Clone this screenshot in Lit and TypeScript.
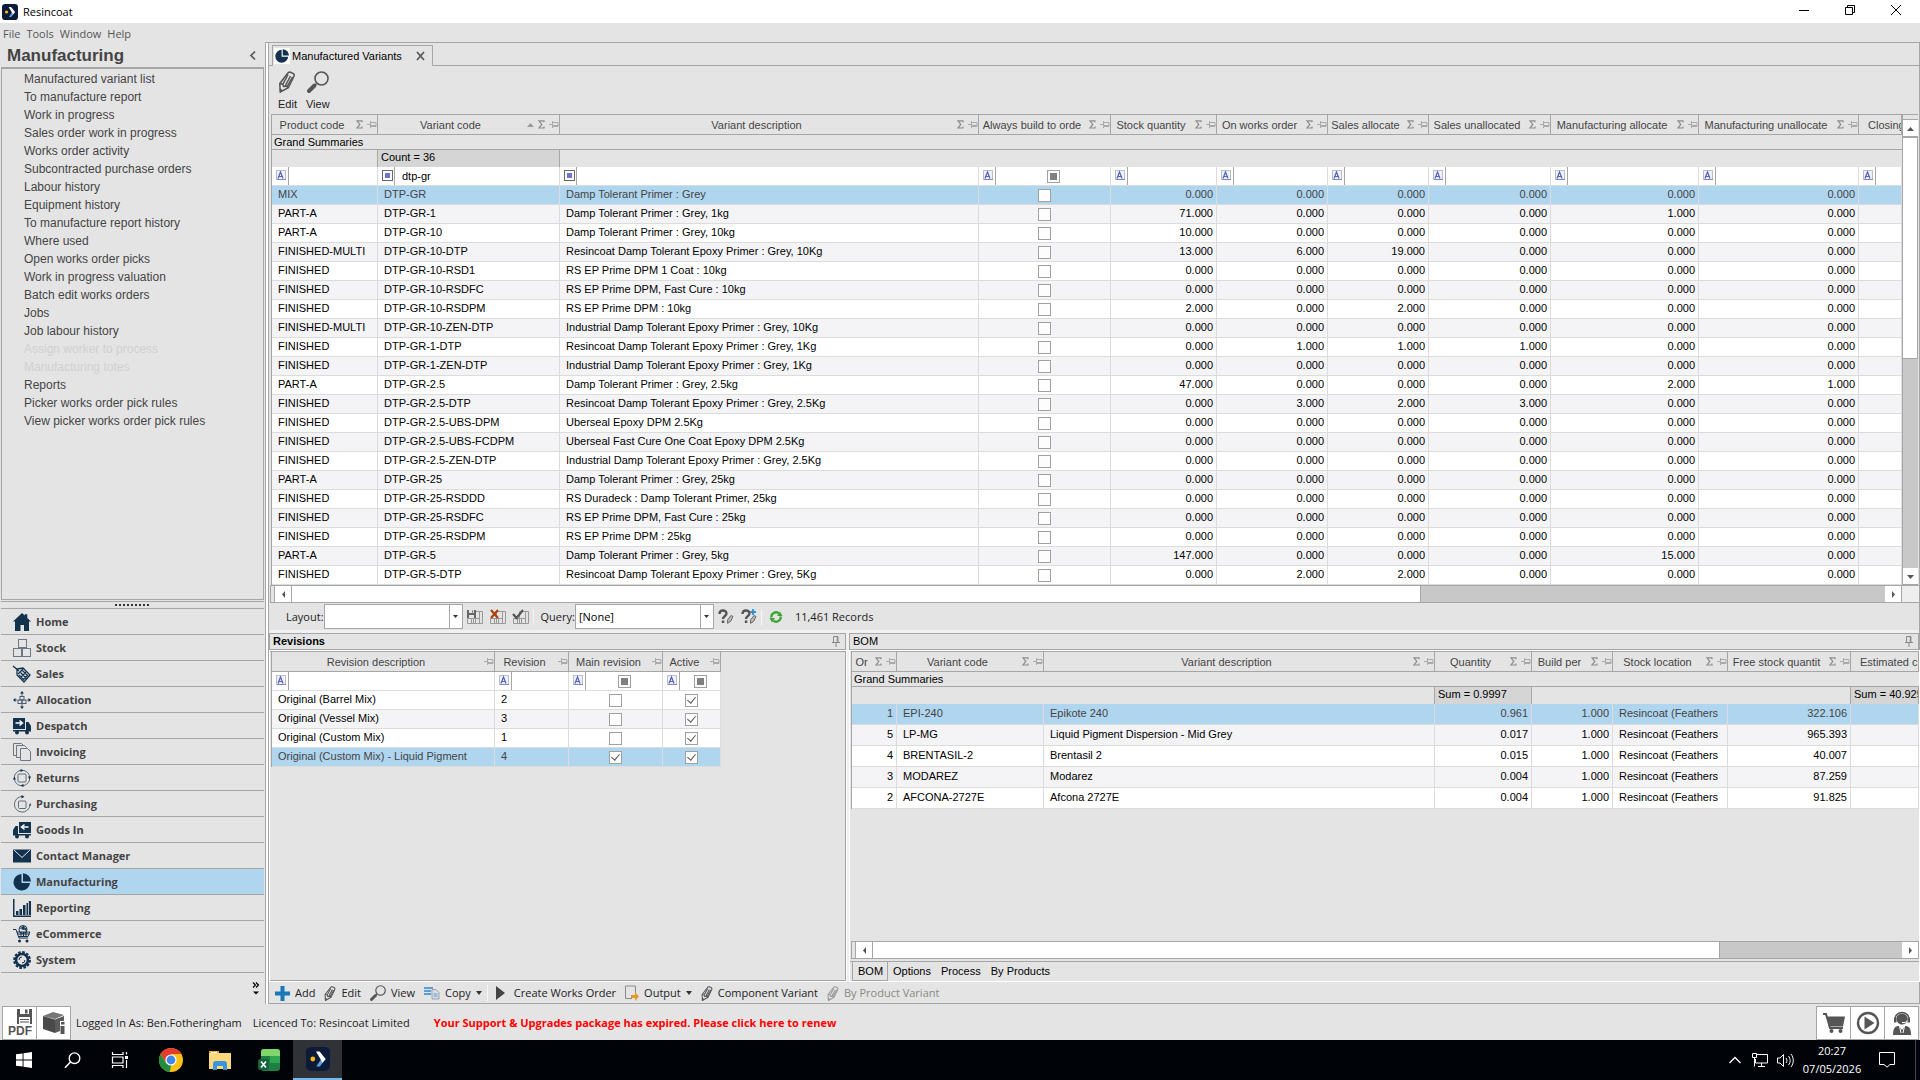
import { LitElement, html, css, svg, nothing, TemplateResult } from "lit";
import { customElement, state } from "lit/decorators.js";
import { classMap } from "lit/directives/class-map.js";

const NAVY = "#12324d";
const GREY = "#555";

const icon = (w: number, h: number, box: string, body: unknown) =>
  html`<svg class="ico" width=${w} height=${h} viewBox=${box} aria-hidden="true">${body}</svg>`;

const sigma = () => icon(7, 9, "0 0 7 9", svg`<path d="M6 2.2V.8H1l2.8 3.6L1 8h5V6.6" fill="none" stroke="#8c8c8c" stroke-width="1.2"/>`);
const sidePin = () => icon(10, 7, "0 0 10 7", svg`<path d="M0 3.500h3.500M3.500 0v7M3.500 1.500h5.500v4h-5.500M4 4.500h5" fill="none" stroke="#aaa"/>`);
const upPin = () => icon(8, 11, "0 0 8 11", svg`<path d="M1.500 6V.5h4.500V6M0 6.500h8M4 7v4M5.200 1v5" fill="none" stroke="#888"/>`);
const tri = (dir: "up" | "down" | "left" | "right", fill = "#555") => {
  const d = { up: "M0 6l3.500-4L7 6z", down: "M0 2h7L3.500 6z", left: "M5 0v7L2 3.500z", right: "M2 0v7l3-3.500z" }[dir];
  return icon(7, 7, "0 0 7 7", svg`<path d=${d} fill=${fill}/>`);
};
const pencil = (w: number, h: number, c = GREY) =>
  icon(w, h, "0 0 16 22", svg`<g fill="none" stroke=${c} stroke-width="1.500" stroke-linejoin="round"><path d="M8.500 2.500Q9.500.8 11.500 1.200L14.500 2.600Q15.800 3.600 15 5.200L9.500 16.500 1.200 21.200.8 12.500z"/><path d="M.8 12.500l3 .8.8 2.200 2.600-.4 2.300 1.400M3.800 13.300L9 3.500M6 15.300L11.500 5M8 15.800L13.500 6"/></g><path d="M1 21.500l-.2-4.500 3.400 2.500z" fill=${c}/>`);
const glass = (s: number) =>
  icon(s, s, "0 0 22 22", svg`<circle cx="14.500" cy="7.500" r="6.500" fill="none" stroke=${GREY} stroke-width="1.600"/><path d="M9.500 12.500l-2 2" stroke=${GREY} stroke-width="1.600"/><path d="M7.500 14.500L2 20" stroke=${GREY} stroke-width="4" stroke-linecap="round"/>`);
const pie = (s: number) =>
  icon(s, s, "0 0 18 18", svg`<path d="M8.500 1A8.300 8.300 0 1 0 17 10H8.500z" fill=${NAVY}/><path d="M10 .3V8.400H18A8.200 8.200 0 0 0 10 .3z" fill=${NAVY}/>`);
const appLogo = (s: number) =>
  icon(s, s, "0 0 24 24", svg`<rect width="24" height="24" rx="5" fill="#0d1a38"/><path d="M16.600 10l-6.300 9.500h3.500l5.800-7.500z" fill="#5ba5dc"/><path d="M10 4.500h3.600l6 7.500-3 3.800z" fill="#fff"/><circle cx="6.800" cy="12" r="2.400" fill="#f6b81c"/>`);
const operatorIcon = (custom = false) =>
  custom
    ? icon(11, 11, "0 0 11 11", svg`<rect x=".5" y=".5" width="10" height="10" fill="#fff" stroke="#667"/><rect x="3" y="3" width="5" height="5" fill="#6f74d0"/>`)
    : icon(11, 11, "0 0 11 11", svg`<rect x=".5" y=".5" width="9" height="9" fill="#eef2fa" stroke="#b9bfca"/><path d="M2 8.500L4.500 2 7 8.500M3 6.500h3" fill="none" stroke="#5560bd" stroke-width="1.200"/><path d="M1 9.500h9" stroke="#7f86c8"/>`);

const n = (body: unknown) => icon(18, 18, "0 0 18 18", body);
const truckBody = svg`<path d="M0 1h12v11H0zM13 5h2.500L18 9v4.500h-5z"/><path d="M0 13h18v1.500H0z"/><circle cx="4" cy="15.500" r="2"/><circle cx="14" cy="15.500" r="2"/>`;
const navIcons: Record<string, TemplateResult> = {
  Home: n(svg`<path d="M9 0l2.800 2.600V1.200h2.500v3.800L18 8.500h-2V18h-5v-6H7.500v6H2V8.500H0z" fill=${NAVY}/>`),
  Stock: n(svg`<g fill="none" stroke="#6b7785"><rect x="5.500" y=".5" width="8" height="8"/><rect x=".5" y="9.500" width="8" height="8"/><rect x="9.500" y="9.500" width="8" height="8"/></g>`),
  Sales: n(svg`<g fill="none" stroke=${NAVY} stroke-width="1.300"><path d="M0 1l6 5M4 4l6-1 7 7-6 7-7-7z"/><path d="M7 7l7 7M9 5l6 6M6 10l5 5M5 9l5-5M8 12l5-5M10 15l5-5"/></g>`),
  Allocation: n(svg`<g fill="none" stroke="#4b5c6e"><rect x="7" y="5.500" width="4" height="3.500"/><rect x="5" y="9" width="4" height="3.500"/><rect x="9" y="9" width="4" height="3.500"/><path d="M9 1v4M9 13v4M1 9h3M14 9h3"/></g><g fill=${NAVY}><path d="M9 0l2 2.500H7zM9 18l2-2.500H7zM0 9l2.500-2v4zM18 9l-2.500-2v4z"/></g>`),
  Despatch: n(svg`<g fill=${NAVY}>${truckBody}</g><path d="M2.500 6h6M6.500 3.500L9.500 6l-3 2.500" fill="none" stroke="#fff" stroke-width="1.500"/>`),
  Invoicing: n(svg`<g fill="#e4e4e4" stroke="#6b7785"><path d="M.5.5h8l2 2v10h-10z"/><path d="M3.500 2.500h8l2 2v10h-10z"/><path d="M7.500 5.500h7l3 3v9h-10z"/></g>`),
  Returns: n(svg`<g fill="none" stroke="#5f6c7a"><circle cx="9" cy="9" r="7.800"/><rect x="5" y="5" width="8" height="8" rx="1"/></g><path d="M7.500 0l3 1.500-3 1.500zM10.500 18l-3-1.500 3-1.500zM0 10.500l1.500-3 1.500 3zM18 7.500l-1.500 3-1.500-3z" fill=${NAVY}/>`),
  Purchasing: n(svg`<g fill="none" stroke="#5f6c7a"><path d="M9 1.500A7.800 7.800 0 1 0 17 10"/><rect x="5.500" y="6" width="7.500" height="7.500" rx="1"/></g><path d="M8.500 0l3 1.800-3 1.800zM16 10.500l1.200-2.500 1 2.500z" fill=${NAVY}/>`),
  "Goods In": n(svg`<g fill=${NAVY} transform="matrix(-1 0 0 1 18 0)">${truckBody}</g><path d="M15.500 6h-6M11.500 3.500L8.500 6l3 2.500" fill="none" stroke="#fff" stroke-width="1.500"/>`),
  "Contact Manager": n(svg`<path d="M0 2.500h18v13H0z" fill=${NAVY}/><path d="M1 3l8 7.500L17 3" fill="none" stroke="#e4e4e4"/>`),
  Manufacturing: pie(18),
  Reporting: n(svg`<path d="M0 0h1.500v16.500H18V18H0z" fill=${NAVY}/><path d="M3 12h2.500v4H3zM6.500 10H9v6H6.500zM10 6h2.500v10H10zM13.500 4H15v12h-1.500zM15.800 2H18v14h-2.200z" fill=${NAVY}/>`),
  eCommerce: n(svg`<g fill="none" stroke=${NAVY}><circle cx="10" cy="4.500" r="4"/><path d="M7 3c2 1 4 2 7 0M0 4.500h3l3 8.500h9M3.800 7h13l-1.800 4.500H5.200M4.500 9h12M8 7v4.500M10.500 7v4.500M13 7v4.500"/></g><path d="M8 2l3-1 1 2-2 2zM11 4l3-1-1 3z" fill=${NAVY}/><circle cx="6.500" cy="16" r="1.500" fill=${NAVY}/><circle cx="14" cy="16" r="1.500" fill=${NAVY}/>`),
  System: n(svg`<circle cx="9" cy="9" r="7.800" fill="none" stroke=${NAVY} stroke-width="2.200" stroke-dasharray="2.600 1.480"/><circle cx="9" cy="9" r="6" fill="none" stroke=${NAVY} stroke-width="2.600"/><path d="M6 9a3 3 0 0 1 3-3M12 9a3 3 0 0 1-3 3" fill="none" stroke=${NAVY}/>`),
};

const gridIcon = (extra: unknown) =>
  icon(16, 16, "0 0 16 16", svg`<g fill="none" stroke="#999"><path d="M6.500 2.500h9v12h-9zM12.500 2v13M.5 9.500h12v5H.5zM4.500 9v6M8.500 9v6"/></g>${extra}`);
const saveLayout = () => gridIcon(svg`<path d="M0 1h9v8H0z" fill="#666"/><path d="M2 1h5v3H2zM2 6h5v3H2z" fill="#e4e4e4"/><path d="M5 1.500h1v2H5z" fill="#666"/>`);
const deleteLayout = () => gridIcon(svg`<path d="M1 1l7 8M8 1L1 9" stroke="#a8420f" stroke-width="2.200"/>`);
const applyLayout = () => gridIcon(svg`<path d="M0 5l3.500 4L10 1" fill="none" stroke="#555" stroke-width="2.200"/>`);
const queryGlyph = (plus: boolean) =>
  icon(16, 16, "0 0 16 16", svg`<path d="M1.500 5C1.500.5 8.500.5 8.500 4.500c0 2.500-3.500 2.500-3.500 5.500" fill="none" stroke="#555" stroke-width="2.400"/><path d="M3.800 11.500h2.500V14H3.800z" fill="#555"/><path d="M13 6.500l2 1-2.500 5-3 1.800.2-3.500z" fill="#bbb" stroke="#666"/>${plus ? svg`<path d="M12 0v6M9 3h6" stroke="#2f8fd6" stroke-width="1.800"/>` : nothing}`);
const refreshIcon = () =>
  icon(14, 14, "0 0 14 14", svg`<g fill="none" stroke="#3fa535" stroke-width="2.300"><path d="M2.300 7.500A4.700 4.700 0 0 1 9.800 3.300M11.700 6.500A4.700 4.700 0 0 1 4.200 10.700"/></g><path d="M8 6h5.500L11 1.500zM6 8H.5L3 12.500z" fill="#3fa535"/>`);
const addIcon = () => icon(15, 15, "0 0 15 15", svg`<path d="M5.500 0h4v5.500H15v4H9.500V15h-4V9.500H0v-4h5.500z" fill="#1878b8"/>`);
const copyIcon = () => icon(16, 14, "0 0 16 14", svg`<path d="M0 1h9v2H0zM0 4h7v2H0zM0 7h7v2H0z" fill="#5a9ed8"/><path d="M8 3.500h4l3 3V13H8z" fill="#d8dde3" stroke="#9aa3ad"/><path d="M9.500 8h4M9.500 10h4" stroke="#5a9ed8"/>`);
const playIcon = () => icon(13, 14, "0 0 13 14", svg`<path d="M0 0l9 7-9 7z" fill="#444"/>`);
const outputIcon = () => icon(14, 16, "0 0 14 16", svg`<path d="M7 13.500H.5V1h10v7" fill="none" stroke="#8a8a8a"/><path d="M6 10h4V7l4 4.500-4 4.500v-3H6z" fill="#e09a2a"/>`);

const SIDE_LINKS = [
  "Manufactured variant list", "To manufacture report", "Work in progress", "Sales order work in progress",
  "Works order activity", "Subcontracted purchase orders", "Labour history", "Equipment history",
  "To manufacture report history", "Where used", "Open works order picks", "Work in progress valuation",
  "Batch edit works orders", "Jobs", "Job labour history", "Assign worker to process", "Manufacturing totes",
  "Reports", "Picker works order pick rules", "View picker works order pick rules",
];
const DISABLED = new Set(["Assign worker to process", "Manufacturing totes"]);

type VariantRow = [string, string, string, ...number[]];
const VARIANTS: VariantRow[] = [
  ["MIX", "DTP-GR", "Damp Tolerant Primer : Grey", 0, 0, 0, 0, 0, 0],
  ["PART-A", "DTP-GR-1", "Damp Tolerant Primer : Grey, 1kg", 71, 0, 0, 0, 1, 0],
  ["PART-A", "DTP-GR-10", "Damp Tolerant Primer : Grey, 10kg", 10, 0, 0, 0, 0, 0],
  ["FINISHED-MULTI", "DTP-GR-10-DTP", "Resincoat Damp Tolerant Epoxy Primer : Grey, 10Kg", 13, 6, 19, 0, 0, 0],
  ["FINISHED", "DTP-GR-10-RSD1", "RS EP Prime DPM 1 Coat : 10kg", 0, 0, 0, 0, 0, 0],
  ["FINISHED", "DTP-GR-10-RSDFC", "RS EP Prime DPM, Fast Cure : 10kg", 0, 0, 0, 0, 0, 0],
  ["FINISHED", "DTP-GR-10-RSDPM", "RS EP Prime DPM : 10kg", 2, 0, 2, 0, 0, 0],
  ["FINISHED-MULTI", "DTP-GR-10-ZEN-DTP", "Industrial Damp Tolerant Epoxy Primer : Grey, 10Kg", 0, 0, 0, 0, 0, 0],
  ["FINISHED", "DTP-GR-1-DTP", "Resincoat Damp Tolerant Epoxy Primer : Grey, 1Kg", 0, 1, 1, 1, 0, 0],
  ["FINISHED", "DTP-GR-1-ZEN-DTP", "Industrial Damp Tolerant Epoxy Primer : Grey, 1Kg", 0, 0, 0, 0, 0, 0],
  ["PART-A", "DTP-GR-2.5", "Damp Tolerant Primer : Grey, 2.5kg", 47, 0, 0, 0, 2, 1],
  ["FINISHED", "DTP-GR-2.5-DTP", "Resincoat Damp Tolerant Epoxy Primer : Grey, 2.5Kg", 0, 3, 2, 3, 0, 0],
  ["FINISHED", "DTP-GR-2.5-UBS-DPM", "Uberseal Epoxy DPM 2.5Kg", 0, 0, 0, 0, 0, 0],
  ["FINISHED", "DTP-GR-2.5-UBS-FCDPM", "Uberseal Fast Cure One Coat Epoxy DPM 2.5Kg", 0, 0, 0, 0, 0, 0],
  ["FINISHED", "DTP-GR-2.5-ZEN-DTP", "Industrial Damp Tolerant Epoxy Primer : Grey, 2.5Kg", 0, 0, 0, 0, 0, 0],
  ["PART-A", "DTP-GR-25", "Damp Tolerant Primer : Grey, 25kg", 0, 0, 0, 0, 0, 0],
  ["FINISHED", "DTP-GR-25-RSDDD", "RS Duradeck : Damp Tolerant Primer, 25kg", 0, 0, 0, 0, 0, 0],
  ["FINISHED", "DTP-GR-25-RSDFC", "RS EP Prime DPM, Fast Cure : 25kg", 0, 0, 0, 0, 0, 0],
  ["FINISHED", "DTP-GR-25-RSDPM", "RS EP Prime DPM : 25kg", 0, 0, 0, 0, 0, 0],
  ["PART-A", "DTP-GR-5", "Damp Tolerant Primer : Grey, 5kg", 147, 0, 0, 0, 15, 0],
  ["FINISHED", "DTP-GR-5-DTP", "Resincoat Damp Tolerant Epoxy Primer : Grey, 5Kg", 0, 2, 2, 0, 0, 0],
];

interface Column { label: string; width?: number; sorted?: boolean; tight?: boolean; filter?: "text" | "custom" | "check"; value?: string; total?: string }
const VARIANT_COLS: Column[] = [
  { label: "Product code", width: 106 },
  { label: "Variant code", width: 182, sorted: true, filter: "custom", value: "dtp-gr", total: "Count = 36" },
  { label: "Variant description", width: 419, filter: "custom" },
  { label: "Always build to orde", width: 132, filter: "check" },
  { label: "Stock quantity", width: 106 },
  { label: "On works order", width: 111 },
  { label: "Sales allocate", width: 101 },
  { label: "Sales unallocated", width: 122 },
  { label: "Manufacturing allocate", width: 148 },
  { label: "Manufacturing unallocate", width: 160 },
  { label: "Closing", tight: true },
];
const REVISION_COLS: Column[] = [
  { label: "Revision description", width: 223 },
  { label: "Revision", width: 74 },
  { label: "Main revision", width: 94, filter: "check" },
  { label: "Active", width: 58, filter: "check" },
];
const REVISIONS: [string, string, boolean, boolean][] = [
  ["Original (Barrel Mix)", "2", false, true],
  ["Original (Vessel Mix)", "3", false, true],
  ["Original (Custom Mix)", "1", false, true],
  ["Original (Custom Mix) - Liquid Pigment", "4", true, true],
];
const BOM_COLS: Column[] = [
  { label: "Or", width: 45 },
  { label: "Variant code", width: 147 },
  { label: "Variant description", width: 391 },
  { label: "Quantity", width: 97, total: "Sum = 0.9997" },
  { label: "Build per", width: 81 },
  { label: "Stock location", width: 115 },
  { label: "Free stock quantit", width: 123 },
  { label: "Estimated c", tight: true, total: "Sum = 40.925" },
];
const BOM: string[][] = [
  ["1", "EPI-240", "Epikote 240", "0.961", "1.000", "Resincoat (Feathers", "322.106"],
  ["5", "LP-MG", "Liquid Pigment Dispersion - Mid Grey", "0.017", "1.000", "Resincoat (Feathers", "965.393"],
  ["4", "BRENTASIL-2", "Brentasil 2", "0.015", "1.000", "Resincoat (Feathers", "40.007"],
  ["3", "MODAREZ", "Modarez", "0.004", "1.000", "Resincoat (Feathers", "87.259"],
  ["2", "AFCONA-2727E", "Afcona 2727E", "0.004", "1.000", "Resincoat (Feathers", "91.825"],
];

@customElement("app-root")
export class AppRoot extends LitElement {
  @state() private selectedVariant = 0;
  @state() private selectedRevision = 3;
  @state() private selectedPart = 0;
  @state() private section = "Manufacturing";

  static styles = css`
    :host { display: block; --bg: #e4e4e4; --line: #a6a6a6; --soft: #dcdcdc; --sel: #b0d5ef; --ui: "Open Sans", "Noto Sans", sans-serif; }
    * { box-sizing: border-box; }
    button, input, select { font: inherit; color: inherit; margin: 0; padding: 0; border: 0; background: none; border-radius: 0; outline: none; }
    button { cursor: pointer; text-align: left; }
    a { color: inherit; text-decoration: none; }
    .ico { display: block; flex: none; overflow: visible; }
    .row { display: flex; align-items: center; }
    .app { display: flex; flex-direction: column; min-height: 100vh; background: var(--bg); color: #000; font: 11px/14px "Liberation Sans", Arial, sans-serif; overflow: hidden; }
    .ui { font-family: var(--ui); font-size: 11px; }

    .titlebar { height: 23px; background: #fff; padding: 0 1px 0 2px; gap: 5px; font-size: 11px; font-family: var(--ui); }
    .titlebar .name { flex: 1; }
    .winbtn { width: 46px; height: 23px; display: grid; justify-items: center; padding-top: 5px; }
    .menu { height: 19px; padding: 2px 3px 0; gap: 6px; color: #555; }
    .body { flex: 1; display: flex; min-width: 0; }

    .side { width: 265px; flex: none; display: flex; flex-direction: column; color: #444; }
    .sidehead { height: 25px; justify-content: space-between; padding: 2px 9px 0 7px; }
    .sidehead h1 { margin: 0; font-size: 17px; line-height: 22px; }
    .links { flex: 1; margin: 0 1px; padding: 1px 0 0; border: 1px solid var(--line); border-top-width: 2px; list-style: none; font-size: 12px; }
    .links a { display: block; padding-left: 22px; line-height: 18px; }
    .links .off { color: #d0d0d0; }
    .grip { height: 8px; margin: 1px 1px 0; border: solid var(--line); border-width: 1px 0; display: grid; place-items: center; }
    .nav { margin: 0 1px; }
    .nav button { display: flex; align-items: center; width: 100%; height: 26px; gap: 5px; padding-left: 12px; border-bottom: 1px solid var(--line); font: bold 11px/16px var(--ui); }
    .nav .on { background: var(--sel); }
    .more { height: 31px; display: flex; justify-content: flex-end; align-items: flex-start; padding: 9px 5px 0 0; }
    .strip { width: 4px; flex: none; background: #fff; border: solid var(--line); border-width: 1px 1px 0; }

    .work { flex: 1; min-width: 0; display: flex; flex-direction: column; border: solid var(--line); border-width: 1px 1px 1px 0; }
    .tabs { display: flex; height: 23px; padding-top: 2px; }
    .tabs::before { content: ""; width: 3px; border-bottom: 1px solid var(--line); }
    .tabs::after { content: ""; flex: 1; border-bottom: 1px solid var(--line); }
    .tab { display: flex; align-items: center; width: 161px; border: 1px solid var(--line); border-bottom: 0; padding: 0 7px 1px 1px; }
    .tab .chip { background: #fff; padding: 1px; margin-right: 2px; }
    .tab .label { flex: 1; }
    .tools { display: flex; height: 48px; padding: 5px 8px 0 9px; gap: 9px; }
    .tools button { display: flex; flex-direction: column; align-items: center; gap: 4px; color: #222; }

    .gridwrap { display: flex; padding-left: 3px; min-width: 0; }
    .clip { flex: 1; min-width: 0; overflow: hidden; border-left: 1px solid var(--line); margin-left: -1px; }
    table { table-layout: fixed; border-collapse: separate; border-spacing: 0; width: 100%; }
    .narrow { width: 449px; }
    th, td { padding: 0; font-weight: normal; text-align: left; white-space: nowrap; overflow: hidden; }
    th { height: 21px; border: solid var(--line); border-width: 1px 1px 1px 0; color: #444; }
    .head { display: flex; align-items: center; gap: 4px; line-height: 18px; }
    .head .label { flex: 1; min-width: 0; overflow: hidden; text-align: center; }
    .head .tight { padding-left: 9px; text-align: left; }
    .grand td { height: 15px; line-height: 13px; padding-left: 2px; border-bottom: 1px solid var(--line); }
    .totals td { height: 17px; line-height: 15px; padding: 0 0 2px 3px; border-right: 1px solid transparent; }
    .totals .sum { background: #d5d5d5; border-color: var(--line); }
    .totals .edge { border-color: var(--line); }
    .filter td, .data td { height: 19px; border: solid var(--soft); border-width: 0 1px 1px 0; line-height: 16px; background: #fff; }
    .filter .row { height: 18px; }
    .op { width: 17px; height: 18px; padding: 0 0 2px 4px; border-right: 1px solid var(--line); flex: none; display: flex; align-items: center; }
    .filter input[type="text"] { flex: 1; min-width: 0; width: 20px; padding-left: 7px; height: 18px; }
    .mid { flex: 1; display: grid; place-items: center; height: 18px; }
    .data td { padding: 0 6px 2px; }
    .data td.num { text-align: right; padding: 0 3px 2px; }
    .data td.chk { padding: 0; }
    .data.tall td { height: 21px; line-height: 18px; }
    .data.alt td { background: #f4f4f7; }
    .data.on td { background: var(--sel); color: #444; }
    input[type="checkbox"] { appearance: none; display: grid; place-items: center; width: 13px; height: 13px; border: 1px solid #a0a0a0; background: #fdfdfd; }
    input[type="checkbox"]:checked::after { content: ""; width: 4px; height: 7px; border: solid #555; border-width: 0 1px 1px 0; transform: rotate(40deg); margin-top: -2px; }
    .tri:indeterminate::after { content: ""; width: 7px; height: 7px; background: #808080; }

    .vbar { width: 16px; flex: none; display: flex; flex-direction: column; background: #c8c8c8; border-left: 1px solid var(--line); margin-right: 1px; }
    .vbar .stub { height: 6px; background: var(--bg); border: solid var(--line); border-width: 1px 0; }
    .vbar button { height: 17px; display: grid; place-items: center; background: #fff; border-bottom: 1px solid var(--line); }
    .vbar .thumb { height: 222px; background: #fff; border: 1px solid var(--line); border-left: 0; }
    .vbar .fill { flex: 1; }
    .hbar { display: flex; height: 18px; background: #c8c8c8; border: solid var(--line); border-width: 1px 0; margin-left: 1px; }
    .hbar .stub { width: 5px; background: var(--bg); border: solid var(--line); border-width: 0 1px; }
    .hbar button { width: 17px; display: grid; place-items: center; background: #fff; border-right: 1px solid var(--line); }
    .hbar .thumb { background: #fff; border-right: 1px solid var(--line); }
    .hbar .fill { flex: 1; }
    .hbar .corner { width: 17px; background: #eee; }
    .w70 { width: 1129px; }
    .w65 { width: 847px; }

    .layoutbar { height: 27px; padding-left: 17px; color: #222; }
    .combo { display: grid; width: 139px; height: 25px; background: #fff; border: 1px solid var(--line); }
    .combo select { grid-area: 1 / 1; appearance: none; padding: 0 18px 0 3px; color: #000; }
    .combo .arrow { grid-area: 1 / 1; justify-self: end; width: 13px; border-left: 1px solid var(--line); display: grid; place-items: center; pointer-events: none; }
    .icons { display: flex; gap: 7px; padding: 0 4px; }
    .sep { width: 1px; height: 16px; background: #f6f6f6; }
    .gapl { margin-left: 7px; }
    .gapw { margin-left: 12px; }

    .panels { flex: 1; display: grid; grid-template-columns: 577px 1fr; column-gap: 3px; padding-top: 3px; background: #f0f0f0; min-width: 0; }
    .panel { display: flex; flex-direction: column; min-width: 0; background: var(--bg); border-left: 1px solid var(--line); }
    .caption { height: 17px; justify-content: space-between; border: 1px solid var(--line); border-left: 0; padding: 0 5px 1px 3px; color: #000; }
    .caption h2 { margin: 0; font-size: 11px; line-height: 14px; }
    .caption .plain { font-weight: normal; }
    .pane { flex: 1; display: flex; flex-direction: column; margin-top: 1px; outline: 1px solid #fff; min-width: 0; }
    .pane.rev { border-right: 1px solid var(--line); border-bottom: 1px solid var(--line); }
    .pane .gridwrap { padding-left: 2px; }
    .rev .gridwrap { border-top: 1px solid var(--line); }
    .rev .gridwrap th { border-top: 0; height: 20px; }
    .space { flex: 1; }
    .subtabs { display: flex; height: 20px; margin-top: 2px; border-top: 1px solid var(--line); padding-left: 2px; }
    .subtabs button { padding: 0 5px 2px; }
    .subtabs .on { border: 1px solid var(--line); border-top: 0; padding: 0 4px 1px 5px; }
    .actions { height: 22px; padding: 2px 0 0 6px; color: #222; }
    .actions button { display: flex; align-items: center; gap: 5px; margin-right: 9px; }
    .actions .sep { margin-right: 8px; }
    .actions .near { margin-right: 5px; }
    .actions button:disabled { color: #8a8a80; }

    .status { height: 36px; padding: 1px 2px 0 2px; }
    .box { width: 35px; height: 34px; margin-right: -1px; background: #fff; border: 1px solid var(--line); display: grid; place-items: center; flex: none; }
    .status .who { margin-left: 6px; color: #222; }
    .status .who + .who { margin-left: 11px; }
    .status .warn { margin-left: 24px; color: #f00; font-weight: bold; flex: 1; }
    .task { height: 40px; background: #000308; color: #fff; }
    .slot { width: 49px; height: 40px; display: grid; place-items: center; }
    .slot.sys { width: 48px; }
    .apps { display: flex; margin-left: 2px; }
    .slot.on { background: #2f3237; border-bottom: 2px solid #76b9ed; }
    .tray { margin-left: auto; display: flex; align-items: center; gap: 9px; }
    .tray .caret { margin-right: 2px; }
    .clock { text-align: center; line-height: 18px; width: 62px; margin: 0 7px 0 -2px; }
    .peek { width: 5px; height: 40px; border-left: 1px solid #3d4a55; margin-left: 11px; }
  `;

  private headRow(cols: Column[], sum = true) {
    return html`<tr>${cols.map((c) => html`<th scope="col"><div class="head">
      <span class=${classMap({ label: true, tight: !!c.tight })}>${c.label}</span>
      ${c.sorted ? tri("up", "#999") : nothing}
      ${c.tight ? nothing : html`${sum ? sigma() : nothing}${sidePin()}`}
    </div></th>`)}</tr>`;
  }

  private totalsRows(cols: Column[]) {
    return html`<tr class="grand"><td colspan=${cols.length}>Grand Summaries</td></tr>
      <tr class="totals">${cols.map((c, i) => html`<td class=${classMap({ sum: !!c.total, edge: !!cols[i + 1]?.total })}>${c.total ?? nothing}</td>`)}</tr>`;
  }

  private filterRow(cols: Column[]) {
    return html`<tr class="filter">${cols.map((c) => html`<td><div class="row">
      <button class="op" aria-label="${c.label} filter operator">${operatorIcon(c.filter === "custom")}</button>
      ${c.filter === "check"
        ? html`<span class="mid"><input class="tri" type="checkbox" .indeterminate=${true} aria-label="Filter ${c.label}" /></span>`
        : html`<input type="text" aria-label="Filter ${c.label}" .value=${c.value ?? ""} />`}
    </div></td>`)}</tr>`;
  }

  private colgroup(cols: Column[]) {
    return html`<colgroup>${cols.map((c) => html`<col style=${c.width ? `width:${c.width}px` : ""} />`)}</colgroup>`;
  }

  private rowClass(i: number, selected: number, tall = false) {
    return classMap({ data: true, tall, alt: i % 2 === 1, on: i === selected });
  }

  private sidebar() {
    return html`<aside class="side">
      <div class="sidehead row"><h1>Manufacturing</h1>
        <button aria-label="Collapse">${icon(6, 9, "0 0 6 9", svg`<path d="M5 .5l-4 4 4 4" fill="none" stroke="#555" stroke-width="1.700"/>`)}</button></div>
      <ul class="links">${SIDE_LINKS.map((l) => html`<li><a href="#" class=${DISABLED.has(l) ? "off" : ""}>${l}</a></li>`)}</ul>
      <div class="grip">${icon(35, 2, "0 0 35 2", svg`<path d="M0 1h35" stroke="#333" stroke-width="2" stroke-dasharray="2 2"/>`)}</div>
      <nav class="nav">${Object.entries(navIcons).map(([name, ic]) => html`
        <button class=${name === this.section ? "on" : ""} @click=${() => (this.section = name)}>${ic}<span>${name}</span></button>`)}</nav>
      <div class="more"><button aria-label="More sections">${icon(8, 13, "0 0 8 13", svg`<path d="M1 .5l2.500 2.500L1 5.500M4 .5l2.500 2.500L4 5.500" fill="none" stroke="#000" stroke-width="1.200"/><path d="M1 9.500h6L4 12.500z"/>`)}</button></div>
    </aside>`;
  }

  private mainGrid() {
    return html`<div class="gridwrap">
      <div class="clip"><table>
        ${this.colgroup(VARIANT_COLS)}
        <thead>${this.headRow(VARIANT_COLS)}</thead>
        <tbody>
          ${this.totalsRows(VARIANT_COLS)}
          ${this.filterRow(VARIANT_COLS)}
          ${VARIANTS.map((r, i) => {
            const [code, variant, desc, ...qty] = r;
            return html`<tr class=${this.rowClass(i, this.selectedVariant)} @click=${() => (this.selectedVariant = i)}>
              <td>${code}</td><td>${variant}</td><td>${desc}</td>
              <td class="chk"><span class="mid"><input type="checkbox" aria-label="Always build ${variant} to order" /></span></td>
              ${qty.map((q) => html`<td class="num">${q.toFixed(3)}</td>`)}
              <td></td></tr>`;
          })}
        </tbody></table></div>
      <div class="vbar"><div class="stub"></div><button aria-label="Scroll up">${tri("up")}</button>
        <div class="thumb"></div><div class="fill"></div><button aria-label="Scroll down">${tri("down")}</button></div>
    </div>
    <div class="hbar"><div class="stub"></div><button aria-label="Scroll left">${tri("left")}</button><div class="thumb w70"></div>
      <div class="fill"></div><button aria-label="Scroll right">${tri("right")}</button><div class="corner"></div></div>`;
  }

  private layoutBar() {
    const arrow = html`<span class="arrow">${icon(5, 3, "0 0 5 3", svg`<path d="M0 0h5L2.500 3z" fill="#333"/>`)}</span>`;
    return html`<div class="layoutbar row ui">
      <label for="layout">Layout:</label>
      <span class="combo"><select id="layout"><option></option></select>${arrow}</span>
      <span class="icons"><button aria-label="Save layout">${saveLayout()}</button><button aria-label="Delete layout">${deleteLayout()}</button><button aria-label="Apply layout">${applyLayout()}</button></span>
      <span class="sep"></span>
      <label class="gapl" for="query">Query:</label>
      <span class="combo"><select id="query"><option>[None]</option></select>${arrow}</span>
      <span class="icons"><button aria-label="Edit query">${queryGlyph(false)}</button><button aria-label="New query">${queryGlyph(true)}</button></span>
      <span class="sep"></span>
      <button class="gapl" aria-label="Refresh">${refreshIcon()}</button>
      <span class="gapw">11,461 Records</span>
    </div>`;
  }

  private revisions() {
    return html`<section class="panel">
      <div class="caption row"><h2>Revisions</h2>${upPin()}</div>
      <div class="pane rev">
        <div class="gridwrap"><div class="clip"><table class="narrow">
          ${this.colgroup(REVISION_COLS)}
          <thead>${this.headRow(REVISION_COLS, false)}</thead>
          <tbody>${this.filterRow(REVISION_COLS)}
          ${REVISIONS.map(([desc, rev, main, active], i) => html`
            <tr class=${this.rowClass(i, this.selectedRevision)} @click=${() => (this.selectedRevision = i)}>
              <td>${desc}</td><td>${rev}</td>
              <td class="chk"><span class="mid"><input type="checkbox" .checked=${main} aria-label="Main revision ${rev}" /></span></td>
              <td class="chk"><span class="mid"><input type="checkbox" .checked=${active} aria-label="Active ${rev}" /></span></td>
            </tr>`)}</tbody></table></div></div>
      </div>
    </section>`;
  }

  private bom() {
    const numeric = new Set([0, 3, 4, 6]);
    return html`<section class="panel">
      <div class="caption row"><h2 class="plain">BOM</h2>${upPin()}</div>
      <div class="pane">
        <div class="gridwrap"><div class="clip"><table>
          ${this.colgroup(BOM_COLS)}
          <thead>${this.headRow(BOM_COLS)}</thead>
          <tbody>${this.totalsRows(BOM_COLS)}
          ${BOM.map((r, i) => html`<tr class=${this.rowClass(i, this.selectedPart, true)} @click=${() => (this.selectedPart = i)}>
            ${r.map((v, c) => html`<td class=${numeric.has(c) ? "num" : ""}>${v}</td>`)}<td></td></tr>`)}
          </tbody></table></div></div>
        <div class="space"></div>
        <div class="hbar"><div class="stub"></div><button aria-label="Scroll left">${tri("left")}</button><div class="thumb w65"></div>
          <div class="fill"></div><button aria-label="Scroll right">${tri("right")}</button></div>
        <div class="subtabs"><button class="on">BOM</button><button>Options</button><button>Process</button><button>By Products</button></div>
      </div>
    </section>`;
  }

  private actions() {
    const drop = icon(6, 4, "0 0 6 4", svg`<path d="M0 0h6L3 4z" fill="#333"/>`);
    return html`<div class="actions row ui">
      <button>${addIcon()}Add</button>
      <button>${pencil(12, 15)}Edit</button>
      <button>${glass(16)}View</button>
      <button class="near">${copyIcon()}Copy${drop}</button><span class="sep"></span>
      <button>${playIcon()}Create Works Order</button>
      <button>${outputIcon()}Output${drop}</button>
      <button>${pencil(12, 15)}Component Variant</button>
      <button disabled>${pencil(12, 15, "#999")}By Product Variant</button>
    </div>`;
  }

  private status() {
    const dark = "#555";
    return html`<footer class="status row ui">
      <button class="box" aria-label="Save PDF"><svg class="ico" width="30" height="32" viewBox="0 0 30 32" aria-hidden="true">
        <path d="M12 2h15v15H12z" fill=${dark}/><path d="M15 2h9v5h-9zM14 10h11v7H14z" fill="#fff"/><path d="M20 2.500h2.500v4H20zM15 12h9v1h-9zM15 14.500h9v1h-9z" fill=${dark}/>
        <text x="15" y="28" text-anchor="middle" font-family="Liberation Sans" font-weight="bold" font-size="12" fill=${dark}>PDF</text></svg></button>
      <button class="box" aria-label="Product information">${icon(24, 24, "0 0 24 24", svg`<path d="M11 1l11 3-9 4L1 5z" fill="#777"/><path d="M1 5l12 3.500V22L1 18z" fill="#4a4a4a"/><path d="M13 8.500L22 5v5h-4v10l-5 2z" fill="#5c5c5c"/><path d="M19 11h3.500v2.500H19zM18.500 15h4v8h-4z" fill="#555"/>`)}</button>
      <span class="who">Logged In As: Ben.Fotheringham</span>
      <span class="who">Licenced To: Resincoat Limited</span>
      <a class="warn" href="#">Your Support &amp; Upgrades package has expired. Please click here to renew</a>
      <button class="box" aria-label="Shop">${icon(24, 22, "0 0 24 22", svg`<path d="M1 2h3l4 14h13" fill="none" stroke=${dark} stroke-width="2"/><path d="M5 4.500h18l-2 10H8z" fill=${dark}/><circle cx="9.500" cy="19" r="2" fill=${dark}/><circle cx="18.500" cy="19" r="2" fill=${dark}/>`)}</button>
      <button class="box" aria-label="Videos">${icon(24, 24, "0 0 24 24", svg`<circle cx="12" cy="12" r="10" fill="none" stroke=${dark} stroke-width="2.400"/><path d="M8.500 5.500l10 6.500-10 6.500z" fill=${dark}/>`)}</button>
      <button class="box" aria-label="Support">${icon(22, 24, "0 0 22 24", svg`<circle cx="11" cy="8" r="5.500" fill=${dark}/><path d="M4 9C3.500-1 18.500-1 18 9" fill="none" stroke=${dark} stroke-width="1.400"/><path d="M3 6.500h2.500v5H3zM16.500 6.500H19v5h-2.500z" fill=${dark}/><path d="M11 11.500c3 .5 4.500-.5 5-2" stroke="#fff" fill="none"/><path d="M2 24c0-7 2-9 6-9l3 4 3-4c4 0 6 2 6 9z" fill=${dark}/><path d="M8.500 15l1.500 7M13.500 15L12 22" stroke="#fff"/>`)}</button>
    </footer>`;
  }

  private taskbar() {
    const w = "#fff";
    return html`<div class="task row ui">
      <button class="slot sys" aria-label="Start">${icon(16, 16, "0 0 16 16", svg`<path d="M0 2.300L6.600 1.400V7.600H0zM7.500 1.300L16 0v7.600H7.500zM0 8.400h6.600v6.200L0 13.700zM7.500 8.400H16V16l-8.500-1.200z" fill=${w}/>`)}</button>
      <button class="slot sys" aria-label="Search">${icon(17, 17, "0 0 17 17", svg`<circle cx="10.500" cy="6.200" r="5.300" fill="none" stroke=${w} stroke-width="1.400"/><path d="M6.500 10L1 15.800" stroke=${w} stroke-width="1.500"/>`)}</button>
      <button class="slot sys" aria-label="Task view">${icon(17, 16, "0 0 17 16", svg`<path d="M.5 0v2.500h10.500V0M.5 16v-2.500h10.500V16M.5 5h10.500v6H.5zM14.500 0v2.500M14.500 8v8" fill="none" stroke=${w} stroke-width="1.200"/><path d="M13 4h3v3h-3z" fill=${w}/>`)}</button>
      <div class="apps">
      <button class="slot" aria-label="Chrome">${icon(24, 24, "0 0 24 24", svg`<circle cx="12" cy="12" r="12" fill="#fbc116"/><path d="M1.600 6A12 12 0 0 1 22.400 6H12v6l-5 3z" fill="#e33b2e"/><path d="M1.600 6l5.200 9L12 17.500 10.800 24A12 12 0 0 1 1.600 6z" fill="#1e8e3e"/><circle cx="12" cy="12" r="5.600" fill="#fff"/><circle cx="12" cy="12" r="4.400" fill="#3f86ea"/>`)}</button>
      <button class="slot" aria-label="File Explorer">${icon(22, 19, "0 0 22 19", svg`<path d="M0 0h10v3H0z" fill="#e8a820"/><path d="M0 2h22v16H0z" fill="#fcd87c"/><path d="M2 1h6v1H2z" fill="#fff"/><path d="M4 19v-6c0-2 1-3 3-3h8c2 0 3 1 3 3v6h-4v-4H8v4z" fill="#3d94db"/>`)}</button>
      <button class="slot" aria-label="Excel"><svg class="ico" width="22" height="22" viewBox="0 0 22 22" aria-hidden="true"><rect x="3" width="19" height="22" rx="3" fill="#1f7f43"/><path d="M6 0h13a3 3 0 0 1 3 3v4H3V3a3 3 0 0 1 3-3z" fill="#7fd66a"/><path d="M12 7h10v7H12z" fill="#2ea84f"/><rect y="10" width="11" height="11" rx="2" fill="#14633a"/><path d="M3 12.500l5 6M8 12.500l-5 6" stroke="#fff" stroke-width="1.600"/></svg></button>
      <button class="slot on" aria-label="Resincoat">${appLogo(24)}</button>
      </div>
      <div class="tray">
        <button class="caret" aria-label="Hidden icons">${icon(12, 8, "0 0 12 8", svg`<path d="M.5 7L6 1.500 11.500 7" fill="none" stroke=${w} stroke-width="1.300"/>`)}</button>
        <button aria-label="Network">${icon(16, 14, "0 0 16 14", svg`<path d="M5 1.500h10.500v8.500H3.500V6M6 13.500h7M9.500 10v3.500M.5 .5h4v4h-4zM2.500 4.500v9" fill="none" stroke=${w}/>`)}</button>
        <button aria-label="Volume">${icon(17, 15, "0 0 17 15", svg`<path d="M.5 5h2.500l3.500-3.500v12L3 10H.5z" fill="none" stroke=${w}/><path d="M9 5c1.200 1.500 1.200 3.500 0 5M11.500 3c2.200 2.800 2.200 6.200 0 9M14 1c3 4 3 9 0 13" fill="none" stroke=${w}/>`)}</button>
        <div class="clock">20:27<br />07/05/2026</div>
        <button aria-label="Notifications">${icon(16, 16, "0 0 16 16", svg`<path d="M.5 .5h15v12H11L8 15.200 5 12.500H.5z" fill="none" stroke=${w}/>`)}</button>
        <div class="peek"></div>
      </div>
    </div>`;
  }

  render() {
    return html`<div class="app">
      <header class="titlebar row">${appLogo(16)}<span class="name">Resincoat</span>
        <div class="row">
          <button class="winbtn" aria-label="Minimise">${icon(10, 10, "0 0 10 10", svg`<path d="M0 5.500h10" stroke="#000"/>`)}</button>
          <button class="winbtn" aria-label="Restore">${icon(10, 10, "0 0 10 10", svg`<path d="M.5 2.500h7v7h-7zM2.500 2.500v-2h7v7h-2" fill="none" stroke="#000"/>`)}</button>
          <button class="winbtn" aria-label="Close">${icon(10, 10, "0 0 10 10", svg`<path d="M0 0l10 10M10 0L0 10" stroke="#000"/>`)}</button>
        </div></header>
      <div class="menu row ui"><button>File</button><button>Tools</button><button>Window</button><button>Help</button></div>
      <div class="body">
        ${this.sidebar()}
        <div class="strip"></div>
        <main class="work">
          <div class="tabs"><div class="tab"><span class="chip">${pie(14)}</span><span class="label">Manufactured Variants</span>
            <button aria-label="Close tab">${icon(9, 8, "0 0 9 8", svg`<path d="M1 0l7 8M8 0L1 8" stroke="#555" stroke-width="1.700"/>`)}</button></div></div>
          <div class="tools"><button>${pencil(16, 22)}Edit</button><button>${glass(22)}View</button></div>
          ${this.mainGrid()}
          ${this.layoutBar()}
          <div class="panels">${this.revisions()}${this.bom()}</div>
          ${this.actions()}
        </main>
      </div>
      ${this.status()}
      ${this.taskbar()}
    </div>`;
  }
}
